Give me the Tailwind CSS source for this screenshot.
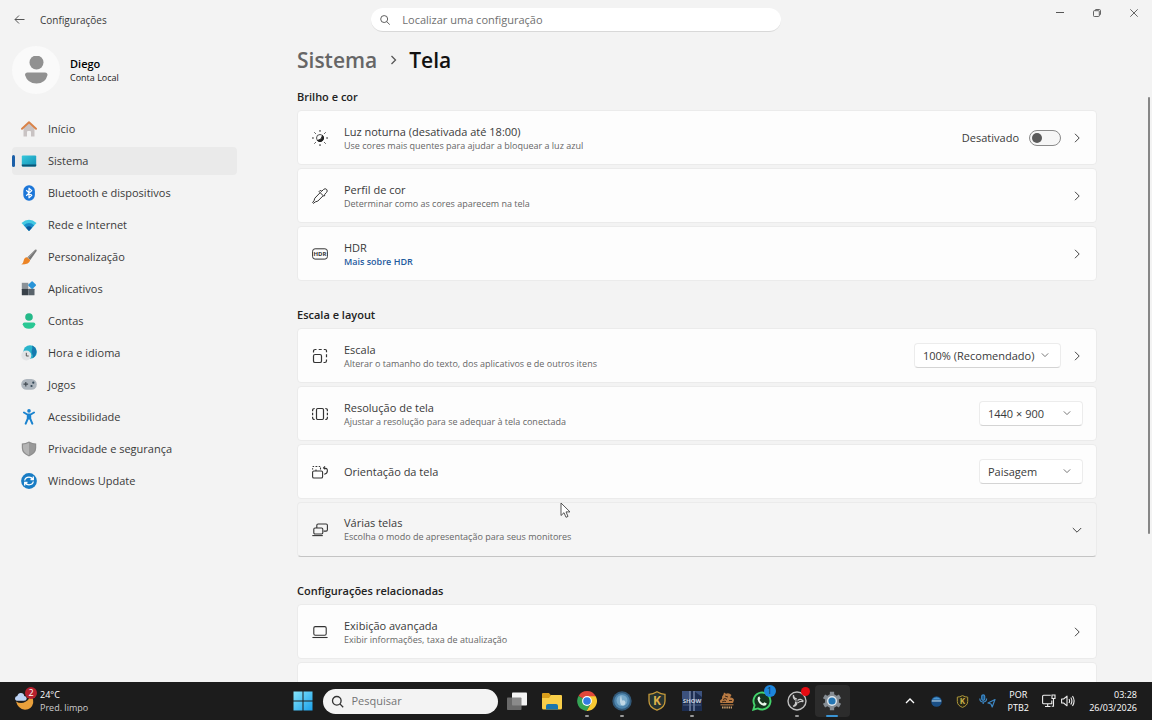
<!DOCTYPE html>
<html lang="pt-BR">
<head>
  <meta charset="UTF-8" />
  <meta name="viewport" content="width=device-width, initial-scale=1.0" />
  <title>Configurações</title>
  <script src="https://cdn.jsdelivr.net/npm/@tailwindcss/browser@4"></script>
</head>
<body class="relative flex h-screen flex-col overflow-hidden bg-[#f3f3f3] font-['Open_Sans','Noto_Sans',sans-serif] text-[11px] leading-4 text-[#3a3a3a]">

  <!-- TITLE BAR -->
  <header class="grid h-10 shrink-0 grid-cols-[1fr_410px_1fr] items-center">
    <div class="flex items-center gap-3 pl-3">
      <button aria-label="Voltar" class="flex h-5 w-4 items-center justify-center">
        <svg class="size-3 text-[#555]" viewBox="0 0 12 12" fill="none" stroke="currentColor"><path d="M10.500 5.500H1M5 1.500l-4 4 4 4" /></svg>
      </button>
      <span class="text-[10px]">Configurações</span>
    </div>
    <label class="flex h-6 items-center gap-3 rounded-full border-b border-[#d8d8d8] bg-white pl-2">
      <svg class="size-3 text-[#555]" viewBox="0 0 12 12" fill="none" stroke="currentColor"><circle cx="5.500" cy="5" r="3.700" /><path d="M8.200 7.700l3.300 3.300" /></svg>
      <input type="text" aria-label="Localizar uma configuração" placeholder="Localizar uma configuração" class="w-full bg-transparent outline-none placeholder:text-[#707070]" />
    </label>
    <div class="flex h-[26px] items-center justify-end self-start text-[#555]">
      <button aria-label="Minimizar" class="flex w-[37px] justify-center"><svg class="size-2" viewBox="0 0 8 8" stroke="currentColor"><path d="M0 3.500h8" /></svg></button>
      <button aria-label="Restaurar" class="flex w-[37px] justify-center"><svg class="size-2" viewBox="0 0 8 8" fill="none" stroke="currentColor" stroke-width=".9"><rect x=".5" y="1.700" width="5.800" height="5.800" rx=".8" /><path d="M2.200 1.500V1.300q0-.8.800-.8h3.300q1.200 0 1.200 1.200v3.400q0 .8-.8.800h-.3" /></svg></button>
      <button aria-label="Fechar" class="flex w-[37px] justify-center"><svg class="size-2" viewBox="0 0 8 8" stroke="currentColor" stroke-width=".9"><path d="M.3.300l7.400 7.400M7.700.300L.300 7.700" /></svg></button>
    </div>
  </header>

  <div class="flex min-h-0 flex-1">

    <!-- SIDEBAR -->
    <aside class="w-[242px] shrink-0 pt-[6px] pl-3">
      <div class="mb-[21px] flex items-center gap-[10px]">
        <div class="flex size-12 items-center justify-center rounded-full bg-[#fafafa]">
          <svg class="h-7 w-6" viewBox="0 0 24 28" fill="#919191"><circle cx="12.500" cy="6.500" r="7" /><path d="M3.500 16.500h17.500q2.500 0 2.500 2.500Q21.500 27.500 12.500 27.500T1 19q0-2.500 2.500-2.500z" /></svg>
        </div>
        <div class="pt-[2px]">
          <p class="leading-[14px] font-semibold text-black">Diego</p>
          <p class="text-[9px] leading-[14px] text-[#222]">Conta Local</p>
        </div>
      </div>

      <nav class="flex w-[225px] flex-col gap-1">
        <a href="#" class="flex h-7 items-center gap-[11px] rounded pl-[9px]">
          <svg class="size-4" viewBox="0 0 16 16"><path d="M2.500 7L8 2l5.500 5v8.500H10V11q0-1-1-1H7q-1 0-1 1v4.500H2.500z" fill="#c9c3c3" /><path d="M1 7.800L8 1.200l7 6.600" fill="none" stroke="#d98248" stroke-width="1.900" stroke-linecap="round" stroke-linejoin="round" /></svg>
          Início
        </a>
        <a href="#" aria-current="page" class="flex h-7 items-center rounded bg-[#eaeaea]">
          <span class="mr-[6px] h-3 w-[3px] rounded-full bg-[#1b5fa8]"></span>
          <svg class="mr-[11px] size-4" viewBox="0 0 16 16"><defs><linearGradient id="sys" x1="0" y1="0" x2="1" y2="1"><stop stop-color="#36c9dc" /><stop offset="1" stop-color="#138fb5" /></linearGradient></defs><rect x=".8" y="2.500" width="14.400" height="11" rx="1" fill="url(#sys)" /><path d="M.8 11.500h14.400v1q0 1-1 1H1.800q-1 0-1-1z" fill="#0b5576" /></svg>
          Sistema
        </a>
        <a href="#" class="flex h-7 items-center gap-[11px] rounded pl-[9px]">
          <svg class="size-4" viewBox="0 0 16 16"><rect x="2.300" y=".3" width="11.600" height="15.400" rx="5.600" fill="#1c76d8" /><path d="M5.200 5.200l5.600 5.200L8 12.800V3.200l2.800 2.400-5.600 5.200" fill="none" stroke="#fff" stroke-width="1.200" stroke-linejoin="round" /></svg>
          Bluetooth e dispositivos
        </a>
        <a href="#" class="flex h-7 items-center gap-[11px] rounded pl-[9px]">
          <svg class="size-4" viewBox="0 0 16 16"><path d="M.5 6Q8 -.5 15.500 6L8 14z" fill="#42c8e2" /><path d="M2.800 8.300Q8 3.500 13.200 8.300L8 14z" fill="#1a8ec9" /><path d="M5 10.700Q8 8 11 10.700L8 14z" fill="#0d5799" /></svg>
          Rede e Internet
        </a>
        <a href="#" class="flex h-7 items-center gap-[11px] rounded pl-[9px]">
          <svg class="size-4" viewBox="0 0 16 16"><path d="M14 .8q2-.8 1.600 1.200L9.300 11 6.200 8.500z" fill="#777" /><path d="M14.200 1L7 9" stroke="#aaa" stroke-width=".9" /><path d="M5.800 8.200l3.400 2.700Q8.500 15.500.3 15.500 2.500 14 2.700 11.500q.5-3 3.100-3.300z" fill="#ec8424" /></svg>
          Personalização
        </a>
        <a href="#" class="flex h-7 items-center gap-[11px] rounded pl-[9px]">
          <svg class="size-4" viewBox="0 0 16 16"><rect x=".8" y="1.800" width="6.500" height="6" fill="#8b9298" /><rect x=".8" y="7.800" width="6.500" height="6.500" rx=".5" fill="#394149" /><rect x="7.300" y="7.800" width="6.200" height="6.500" rx=".5" fill="#59636b" /><rect x="8.100" y="1.100" width="6" height="6" rx=".8" transform="rotate(45 11.100 4.100)" fill="#2894d8" /></svg>
          Aplicativos
        </a>
        <a href="#" class="flex h-7 items-center gap-[11px] rounded pl-[9px]">
          <svg class="size-4" viewBox="0 0 16 16"><circle cx="8" cy="4" r="3.800" fill="#25b989" /><path d="M3.500 9.500h9q1.800 0 1.800 1.700Q13.300 15.800 8 15.800T1.700 11.200q0-1.700 1.800-1.700z" fill="#2ac894" /></svg>
          Contas
        </a>
        <a href="#" class="flex h-7 items-center gap-[11px] rounded pl-[9px]">
          <svg class="size-4" viewBox="0 0 16 16"><circle cx="9" cy="7" r="6.800" fill="#2ab4cb" /><path d="M11 .5q4 1.500 4.500 5.500 0 5-4 7.300 1-2.500-.3-4.300-1.200-1.500-.5-3.500 1.300-2 .3-5z" fill="#1679ae" /><circle cx="5.300" cy="10.500" r="5" fill="#e2e4e6" /><path d="M5.300 7.800V11h2.400" fill="none" stroke="#555" /></svg>
          Hora e idioma
        </a>
        <a href="#" class="flex h-7 items-center gap-[11px] rounded pl-[9px]">
          <svg class="size-4" viewBox="0 0 16 16"><rect x=".2" y="2" width="15.600" height="10.800" rx="5.400" fill="#adb5bd" /><path d="M4.800 5v4.500M2.500 7.200h4.600" stroke="#434b53" stroke-width="1.200" /><circle cx="10.500" cy="9" r="1.100" fill="#344858" /><circle cx="12.300" cy="5.700" r="1.100" fill="#344858" /></svg>
          Jogos
        </a>
        <a href="#" class="flex h-7 items-center gap-[11px] rounded pl-[9px]">
          <svg class="size-4" viewBox="0 0 16 16" fill="none" stroke="#1a83cf" stroke-width="2" stroke-linecap="round" stroke-linejoin="round"><circle cx="8" cy="1.900" r="1.800" fill="#1a83cf" stroke="none" /><path d="M3 3.500l3.300 2h3.400l3.300-2M6.800 5.600v4L4.700 14.700M9.200 5.600v4l2.100 5.100M8 5.500v4" /></svg>
          Acessibilidade
        </a>
        <a href="#" class="flex h-7 items-center gap-[11px] rounded pl-[9px]">
          <svg class="size-4" viewBox="0 0 16 16"><path d="M8 .5q3.500 2 7.200 2V7q0 5.500-7.200 8.500Q.8 12.500.8 7V2.500q3.700 0 7.200-2z" fill="#8e8e8e" /><path d="M8 1.800q3 1.500 6 1.700V7q0 4.500-6 7.200z" fill="#999" /><path d="M8 1.800Q5 3.300 2 3.500V7q0 4.500 6 7.200z" fill="#b4b4b4" /></svg>
          Privacidade e segurança
        </a>
        <a href="#" class="flex h-7 items-center gap-[11px] rounded pl-[9px]">
          <svg class="size-4" viewBox="0 0 16 16"><circle cx="8" cy="8" r="7.900" fill="#187cc4" /><path d="M3.700 7.500Q4.300 4.200 8 4.200q2.500 0 3.800 2M12.300 8.500q-.6 3.300-4.300 3.300-2.500 0-3.800-2M12.300 3.500v3H9.500M3.700 12.500v-3h2.800" fill="none" stroke="#fff" stroke-width="1.300" /></svg>
          Windows Update
        </a>
      </nav>
    </aside>

    <!-- CONTENT -->
    <main class="relative flex flex-1 justify-center overflow-hidden">
      <div class="w-full max-w-[800px] pt-[6px]">
        <h1 class="flex items-center text-[21px] leading-7 font-semibold">
          <a href="#" class="text-[#666]">Sistema</a>
          <svg class="mx-[10px] size-3 text-[#555]" viewBox="0 0 12 12" fill="none" stroke="currentColor" stroke-width="1.300"><path d="M4.500 2L8.500 6l-4 4" /></svg>
          <span class="text-[#111]">Tela</span>
        </h1>

        <section class="mt-[15px]">
          <h2 class="mb-[5px] font-semibold text-[#222]">Brilho e cor</h2>
          <div class="flex flex-col gap-[3px]">
            <div class="flex h-[55px] items-center rounded border border-[#ebebeb] bg-[#fdfdfd] pr-[13px] pl-[14px]">
              <svg class="mr-4 size-4 text-[#222]" viewBox="0 0 16 16" fill="none" stroke="currentColor"><circle cx="8" cy="8" r="3.500" stroke-width=".8" /><path d="M10.500 5.500a3.500 3.500 0 1 1-5 5q4.500-.5 5-5z" fill="currentColor" /><path d="M8 .4v1M8 14.600v1M.4 8h1M14.600 8h1M2.700 2.700l.7.700M12.600 12.600l.7.700M2.700 13.300l.7-.7M12.600 3.400l.7-.7" stroke-linecap="round" /></svg>
              <div class="flex-1 pt-[2px]">
                <p class="leading-[14px]">Luz noturna (desativada até 18:00)</p>
                <p class="text-[9px] leading-[14px] text-[#666]">Use cores mais quentes para ajudar a bloquear a luz azul</p>
              </div>
              <label for="luz" class="mr-[10px]">Desativado</label>
              <input id="luz" type="checkbox" role="switch" class="mr-[10px] flex h-4 w-8 appearance-none items-center rounded-full border border-[#8a8a8a] bg-[#f6f6f6] pl-[2px] before:size-[10px] before:rounded-full before:bg-[#5a5a5a] checked:bg-[#1b5fa8] checked:pl-[18px] checked:before:bg-white" />
              <button aria-label="Abrir luz noturna"><svg class="size-3 text-[#444]" viewBox="0 0 12 12" fill="none" stroke="currentColor"><path d="M4 1.800L8.200 6 4 10.200" /></svg></button>
            </div>
            <div class="flex h-[55px] items-center rounded border border-[#ebebeb] bg-[#fdfdfd] pr-[13px] pl-[14px]">
              <svg class="mr-4 size-4 text-[#333]" viewBox="0 0 16 16" fill="none" stroke="currentColor" stroke-linejoin="round" stroke-linecap="round"><path d="M9.700 3.300l1.800-1.800q1.700-1.600 3.200 0 1.200 1.500-.2 3l-1.900 1.800.5.700-1.300 1.300-4.700-4.700L8.400 2.300zM8 4.800l-5.200 5.400-.8 2.600-1.400 1.700.8.900 1.900-1.500 2.500-.8L11 7.900" /></svg>
              <div class="flex-1 pt-[2px]">
                <p class="leading-[14px]">Perfil de cor</p>
                <p class="text-[9px] leading-[14px] text-[#666]">Determinar como as cores aparecem na tela</p>
              </div>
              <button aria-label="Abrir perfil de cor"><svg class="size-3 text-[#444]" viewBox="0 0 12 12" fill="none" stroke="currentColor"><path d="M4 1.800L8.200 6 4 10.200" /></svg></button>
            </div>
            <div class="flex h-[55px] items-center rounded border border-[#ebebeb] bg-[#fdfdfd] pr-[13px] pl-[14px]">
              <svg class="mr-4 size-4 text-[#333]" viewBox="0 0 16 16"><rect x=".6" y="2.800" width="14.800" height="10.300" rx="2.500" fill="none" stroke="currentColor" /><text x="8" y="10.300" text-anchor="middle" font-size="6" font-weight="700" fill="currentColor">HDR</text></svg>
              <div class="flex-1 pt-[2px]">
                <p class="leading-[14px]">HDR</p>
                <a href="#" class="block text-[9px] leading-[14px] font-semibold text-[#1f5b9f]">Mais sobre HDR</a>
              </div>
              <button aria-label="Abrir HDR"><svg class="size-3 text-[#444]" viewBox="0 0 12 12" fill="none" stroke="currentColor"><path d="M4 1.800L8.200 6 4 10.200" /></svg></button>
            </div>
          </div>
        </section>

        <section class="mt-[26px]">
          <h2 class="mb-[5px] font-semibold text-[#222]">Escala e layout</h2>
          <div class="flex flex-col gap-[3px]">
            <div class="flex h-[55px] items-center rounded border border-[#ebebeb] bg-[#fdfdfd] pr-[13px] pl-[14px]">
              <svg class="mr-4 size-4 text-[#333]" viewBox="0 0 16 16" fill="none" stroke="currentColor" stroke-width="1.200"><rect x="1.500" y="6.500" width="8" height="8" rx="1.600" /><path d="M1.500 4.500V3.300q0-1.800 1.800-1.800h1.200M6.700 1.500h3M11.800 1.500h1.400q1.300 0 1.300 1.300v1.500M14.500 6.300v3M14.500 11.500v1.200q0 1.800-1.800 1.800h-1.200" /></svg>
              <div class="flex-1 pt-[2px]">
                <p class="leading-[14px]">Escala</p>
                <p class="text-[9px] leading-[14px] text-[#666]">Alterar o tamanho do texto, dos aplicativos e de outros itens</p>
              </div>
              <div class="relative mr-[10px]">
                <select aria-label="Escala" class="h-[25px] w-[147px] appearance-none rounded border border-[#ececec] border-b-[#d4d4d4] bg-white pl-2">
                  <option>100% (Recomendado)</option>
                </select>
                <svg class="pointer-events-none absolute top-2 right-3 size-2 text-[#777]" viewBox="0 0 8 8" fill="none" stroke="currentColor"><path d="M.8 2.400L4 5.600l3.200-3.200" /></svg>
              </div>
              <button aria-label="Abrir escala"><svg class="size-3 text-[#444]" viewBox="0 0 12 12" fill="none" stroke="currentColor"><path d="M4 1.800L8.200 6 4 10.200" /></svg></button>
            </div>
            <div class="flex h-[55px] items-center rounded border border-[#ebebeb] bg-[#fdfdfd] pr-[13px] pl-[14px]">
              <svg class="mr-4 size-4 text-[#333]" viewBox="0 0 16 16" fill="none" stroke="currentColor" stroke-width="1.200"><rect x="4.500" y="2.500" width="7" height="11" rx="1.200" /><path d="M2.700 2.500Q.6 2.500.6 4.300v1M.6 6.700v2.600M.6 10.700v1q0 1.800 2.100 1.800M13.300 2.500q2.100 0 2.100 1.800v1M15.400 6.700v2.600M15.400 10.700v1q0 1.800-2.100 1.800" /></svg>
              <div class="flex-1 pt-[2px]">
                <p class="leading-[14px]">Resolução de tela</p>
                <p class="text-[9px] leading-[14px] text-[#666]">Ajustar a resolução para se adequar à tela conectada</p>
              </div>
              <div class="relative">
                <select aria-label="Resolução de tela" class="h-[25px] w-[104px] appearance-none rounded border border-[#ececec] border-b-[#d4d4d4] bg-white pl-2">
                  <option>1440 × 900</option>
                </select>
                <svg class="pointer-events-none absolute top-2 right-3 size-2 text-[#777]" viewBox="0 0 8 8" fill="none" stroke="currentColor"><path d="M.8 2.400L4 5.600l3.200-3.200" /></svg>
              </div>
            </div>
            <div class="flex h-[55px] items-center rounded border border-[#ebebeb] bg-[#fdfdfd] pr-[13px] pl-[14px]">
              <svg class="mr-4 size-4 text-[#333]" viewBox="0 0 16 16" fill="none" stroke="currentColor" stroke-width="1.100"><rect x=".6" y="7" width="10" height="7" rx="1.300" /><path d="M.6 5.500V4.300M.6 2.500h1.500M3.500 2.500h1.800M6.700 2.500h1.500M8.500 3.500v2M4 7V5.500M11.500 4q3.900-.5 3.900 2.700 0 2.800-3.200 3.500M13 2.300L11.500 4l1.800 1.400" /></svg>
              <p class="flex-1">Orientação da tela</p>
              <div class="relative">
                <select aria-label="Orientação da tela" class="h-[25px] w-[104px] appearance-none rounded border border-[#ececec] border-b-[#d4d4d4] bg-white pl-2">
                  <option>Paisagem</option>
                </select>
                <svg class="pointer-events-none absolute top-2 right-3 size-2 text-[#777]" viewBox="0 0 8 8" fill="none" stroke="currentColor"><path d="M.8 2.400L4 5.600l3.200-3.200" /></svg>
              </div>
            </div>
            <div class="flex h-[55px] items-center rounded border border-[#ebebeb] border-b-[#c4c4c4] bg-[#f5f5f5] pr-[13px] pl-[14px]">
              <svg class="mr-4 size-4 text-[#333]" viewBox="0 0 16 16" fill="none" stroke="currentColor" stroke-width="1.100"><path d="M4.800 6V3.300q0-1.300 1.300-1.300h8q1.300 0 1.300 1.300v4.500q0 1.300-1.300 1.300h-2.500" /><rect x="1.800" y="6" width="9" height="6" rx="1.200" /><path d="M.3 13.600h10.500" /></svg>
              <div class="flex-1">
                <p class="leading-[14px]">Várias telas</p>
                <p class="text-[9px] leading-[14px] text-[#666]">Escolha o modo de apresentação para seus monitores</p>
              </div>
              <button aria-label="Expandir várias telas"><svg class="size-3 text-[#444]" viewBox="0 0 12 12" fill="none" stroke="currentColor"><path d="M1.800 4L6 8.200 10.200 4" /></svg></button>
            </div>
          </div>
        </section>

        <section class="mt-[26px]">
          <h2 class="mb-[5px] font-semibold text-[#222]">Configurações relacionadas</h2>
          <div class="flex flex-col gap-[3px]">
            <div class="flex h-[55px] items-center rounded border border-[#ebebeb] bg-[#fdfdfd] pr-[13px] pl-[14px]">
              <svg class="mr-4 size-4 text-[#333]" viewBox="0 0 16 16" fill="none" stroke="currentColor" stroke-width="1.100"><rect x="1.800" y="2.600" width="12.400" height="8.600" rx="1.500" /><path d="M.4 13.500h15.200" /></svg>
              <div class="flex-1 pt-[2px]">
                <p class="leading-[14px]">Exibição avançada</p>
                <p class="text-[9px] leading-[14px] text-[#666]">Exibir informações, taxa de atualização</p>
              </div>
              <button aria-label="Abrir exibição avançada"><svg class="size-3 text-[#444]" viewBox="0 0 12 12" fill="none" stroke="currentColor"><path d="M4 1.800L8.200 6 4 10.200" /></svg></button>
            </div>
            <div class="h-[55px] rounded border border-[#ebebeb] bg-[#fdfdfd]"></div>
          </div>
        </section>
      </div>

      <!-- scrollbar thumb -->
      <div class="absolute top-[57px] right-[2px] h-[437px] w-[2px] rounded-full bg-[#868686]"></div>
    </main>
  </div>

  <!-- mouse pointer -->
  <svg class="absolute top-[502px] left-[560px] z-10 h-4 w-[11px]" viewBox="0 0 11 16"><path d="M1 1v12.500l3-2.800 2 4.600 2-.9-2-4.500h4z" fill="#fff" stroke="#444" stroke-width=".9" stroke-linejoin="round" /></svg>

  <!-- TASKBAR -->
  <footer class="flex h-[38px] shrink-0 items-center bg-[#1c1c1c] pr-[15px] pl-[5px] text-white">
    <div class="flex flex-1">
      <button class="flex items-center gap-[6px] pl-[9px] text-left">
        <span class="relative">
          <svg class="size-5" viewBox="0 0 20 20"><path d="M2 10.500q5 3 9.500.3Q16 8.500 15.500 4.500q4.500 2 3.700 7.500-1.500 6.500-8.200 6.700Q4 18 2 10.500z" fill="#e9a03b" /><path d="M4 9.800q-3 0-3-2.400Q1 5.300 3.300 5 4.200 1.800 7 2q2.800.2 3.300 3 2.400.2 2.400 2.400t-2.700 2.400z" fill="#bcd3f5" /></svg>
          <span class="absolute -top-1 -right-[3px] flex size-3 items-center justify-center rounded-full bg-[#b5202e] text-[9px]">2</span>
        </span>
        <span class="text-[9px] leading-[13px]"><span class="block">24°C</span><span class="block text-[#ccc]">Pred. limpo</span></span>
      </button>
    </div>

    <div class="flex items-center">
      <button aria-label="Iniciar" class="mr-[10px]"><svg class="size-5" viewBox="0 0 20 20"><defs><linearGradient id="win" x1="0" y1="0" x2="1" y2="1"><stop stop-color="#86e5fb" /><stop offset="1" stop-color="#1aa0ea" /></linearGradient></defs><path d="M.5.500h9v9h-9zM10.500.500h9v9h-9zM.5 10.500h9v9h-9zM10.500 10.500h9v9h-9z" fill="url(#win)" /></svg></button>
      <label class="mr-[2px] flex h-[25px] w-[175px] items-center gap-2 rounded-full bg-[#f3f3f3] pl-2">
        <svg class="size-[13px] shrink-0 text-[#333]" viewBox="0 0 13 13" fill="none" stroke="currentColor" stroke-width="1.300"><circle cx="5.800" cy="5.800" r="4.300" /><path d="M8.900 8.900l3.300 3.300" /></svg>
        <input type="text" aria-label="Pesquisar" placeholder="Pesquisar" class="w-full bg-transparent text-[11px] text-black outline-none placeholder:text-[#737373]" />
      </label>
      <button aria-label="Visão de tarefas" class="flex h-8 w-[35px] items-center justify-center"><svg class="size-5" viewBox="0 0 20 20"><rect x="5" y="1.500" width="15" height="13" rx=".8" fill="#f4f4f4" /><rect x="0" y="6.500" width="14.500" height="12.500" rx=".8" fill="#777" fill-opacity=".85" /></svg></button>
      <button aria-label="Explorador de Arquivos" class="flex h-8 w-[35px] items-center justify-center"><svg class="size-5" viewBox="0 0 20 20"><path d="M0 3q0-1 1-1h6l2 2.500v4H0z" fill="#d99e1b" /><path d="M0 7h7l2-3h10q1 0 1 1v12q0 1.500-1.500 1.500h-17Q0 18.500 0 17z" fill="#f8ce49" /><path d="M4 18.500V15q0-2 2-2h8q2 0 2 2v3.500z" fill="#1976ae" /></svg></button>
      <button aria-label="Google Chrome" class="relative flex h-8 w-[35px] items-center justify-center">
        <svg class="size-5" viewBox="0 0 20 20"><path d="M10 10L1.500 5A9.900 9.900 0 0 1 18.700 5.200z" fill="#e0473a" /><path d="M10 10L1.500 5a9.900 9.900 0 0 0 8 14.900L14 12z" fill="#35a455" /><path d="M10 5.200h8.700A9.900 9.900 0 0 1 9.500 19.900l4.800-7.800z" fill="#f8c932" /><circle cx="10" cy="10" r="4.900" fill="#fff" /><circle cx="10" cy="10" r="3.800" fill="#347be2" /></svg>
        <span class="absolute bottom-0 h-[2px] w-1 rounded-full bg-[#999]"></span>
      </button>
      <button aria-label="Navegador" class="relative flex h-8 w-[35px] items-center justify-center">
        <svg class="size-5" viewBox="0 0 20 20"><circle cx="10" cy="10" r="9.700" fill="#315878" /><circle cx="10" cy="10" r="7.800" fill="#4f86ae" /><circle cx="10" cy="9.500" r="5.500" fill="#79aaca" /><path d="M9 4q-2 6 0 10 4 1.500 4.500-2.500-.5-3-3.500-2z" fill="#c0d8e6" /></svg>
        <span class="absolute bottom-0 h-[2px] w-1 rounded-full bg-[#999]"></span>
      </button>
      <button aria-label="K" class="flex h-8 w-[35px] items-center justify-center"><svg class="size-5" viewBox="0 0 20 20"><path d="M10 .8q4 2.500 8 2.500V10q0 6.500-8 9.200Q2 16.500 2 10V3.300q4 0 8-2.500z" fill="#263331" stroke="#c69a3a" stroke-width="1.300" /><text x="10" y="14.300" text-anchor="middle" font-size="12" font-weight="700" fill="#ddb04a">K</text></svg></button>
      <button aria-label="Show" class="relative flex h-8 w-[35px] items-center justify-center">
        <svg class="size-5" viewBox="0 0 20 20"><rect width="20" height="20" fill="#1c2d51" /><path d="M0 0h8v8H0zM12 0h8v6z" fill="#3c527e" /><path d="M8 0v20M12 0v20" stroke="#8292b2" stroke-width="1.300" /><text x="10" y="12" text-anchor="middle" font-size="6" font-weight="700" fill="#cbd2df">SHOW</text><path d="M1 14h18" stroke="#60729a" stroke-width=".7" /></svg>
        <span class="absolute bottom-0 h-[2px] w-1 rounded-full bg-[#999]"></span>
      </button>
      <button aria-label="Jogo" class="flex h-8 w-[35px] items-center justify-center"><svg class="h-[18px] w-4" viewBox="0 0 16 18"><path d="M1.500 11Q0 8 3 7q-.5-3 1.500-4.500L5 .5l2 1.300Q10 .5 12.500 3L11 5.500q3.500-.2 4 2.500l-1 3z" fill="#b87a43" /><path d="M4 7.500q2-2 4 0M6 4l3 1M3 10q2-1.500 4-.5M10 8.500h3" fill="none" stroke="#3c2819" /><path d="M1.500 12h13v1.500h-13z" fill="#8a5f38" /><path d="M3 15.500h10" stroke="#c79b68" stroke-width="2" stroke-dasharray="1.500 .7" /></svg></button>
      <button aria-label="WhatsApp" class="relative flex h-8 w-[35px] items-center justify-center">
        <svg class="size-5" viewBox="0 0 20 20"><path d="M1.300 18.700l1.300-4.500a8.500 8.500 0 1 1 3.200 3.200z" fill="#15351f" stroke="#43d36b" stroke-width="1.900" /><path d="M7.300 5.300l1.200 2.500-1 1.300q1.200 2.300 3.500 3.400l1.300-1.300 2.500 1.300q-.4 2.500-3 2.300Q7 13.800 5.500 8.300q0-2.300 1.800-3z" fill="#e8f7ec" /></svg>
        <span class="absolute top-0 right-1 flex size-3 items-center justify-center rounded-full bg-[#1d86dc] text-[9px] text-[#12324f]">1</span>
      </button>
      <button aria-label="OBS Studio" class="relative flex h-8 w-[35px] items-center justify-center">
        <svg class="size-5" viewBox="0 0 20 20"><circle cx="10" cy="10" r="9" fill="#282828" stroke="#c0c0c0" stroke-width="1.400" /><path d="M9.500 9.500q-4-1.500-3-5.500M10.500 9.500q3.300-2.700 6 .8M10 10.500q.2 4.200-3.800 5M6.500 4q0 3.500 3.500 4M16.300 10.700q-3.300-1.300-5.300 1.300M6 15.300Q9.200 14 8.500 10.500" fill="none" stroke="#c9c9c9" stroke-width="1.200" /></svg>
        <span class="absolute top-[2px] right-[5px] size-[9px] rounded-full bg-[#e60b12]"></span>
        <span class="absolute bottom-0 h-[2px] w-1 rounded-full bg-[#999]"></span>
      </button>
      <button aria-label="Configurações" class="relative flex h-8 w-[35px] items-center justify-center rounded bg-[#2c2c2c]">
        <svg class="size-5" viewBox="0 0 20 20"><circle cx="10" cy="10" r="7" fill="#868d94" /><path d="M10 .8v18.400M2 5.400l16 9.200M2 14.600l16-9.200" stroke="#868d94" stroke-width="4.300" /><circle cx="10" cy="10" r="5" fill="#dfe7ed" /><circle cx="10" cy="10" r="3.600" fill="#2476b4" /></svg>
        <span class="absolute bottom-0 h-[2px] w-3 rounded-full bg-[#3a94d4]"></span>
      </button>
    </div>

    <div class="flex flex-1 items-center justify-end">
      <button aria-label="Mostrar ícones ocultos" class="flex w-[26px] justify-center"><svg class="size-[10px]" viewBox="0 0 10 10" fill="none" stroke="#fff" stroke-width="1.300"><path d="M1 7l4-4 4 4" /></svg></button>
      <button aria-label="Rede VPN" class="flex w-[26px] justify-center"><svg class="size-[11px]" viewBox="0 0 11 11"><circle cx="5.500" cy="5.500" r="5.300" fill="#1a4f86" /><path d="M1 3.500Q5.500-1 10 3.500z" fill="#4b96cf" /><path d="M.8 4.300h9.400v1.300H.8z" fill="#a9c7de" /></svg></button>
      <button aria-label="K" class="flex w-[26px] justify-center"><svg class="size-[13px]" viewBox="0 0 13 13"><path d="M6.500.600q2.700 1.500 5.200 1.500v4.400q0 4-5.200 5.900-5.200-1.900-5.200-5.900V2.100q2.500 0 5.200-1.500z" fill="#292615" stroke="#ae983b" /><text x="6.500" y="9.300" text-anchor="middle" font-size="8" font-weight="700" fill="#c7b04a">K</text></svg></button>
      <button aria-label="Microfone e localização em uso" class="flex w-6 justify-center"><svg class="h-[14px] w-[17px]" viewBox="0 0 17 14" fill="none" stroke="#3d87c4" stroke-width="1.200"><rect x="2.700" y=".8" width="3" height="5.500" rx="1.500" fill="#1c598c" /><path d="M.8 4.500q0 3.500 3.400 3.500t3.400-3.500M4.200 8v2M16 5.500L9 9l3 1 1.200 3z" stroke-linejoin="round" /></svg></button>
      <button class="w-[38px] text-center text-[9px] leading-[13px]">POR<br />PTB2</button>
      <button aria-label="Rede e volume" class="mr-[10px] flex w-[42px] items-center justify-center gap-[5px]">
        <svg class="h-[14px] w-[14px]" viewBox="0 0 14 14" fill="none" stroke="#eee" stroke-width="1.100"><path d="M8.800 1.300H1.600q-1 0-1 1v6.400q0 1 1 1h8.200V6.500M3 12.500h5.500M5.700 9.700v2.800M10 1h3v3.500h-3zM11.500 4.500v7.800H9.700" /></svg>
        <svg class="h-[14px] w-[14px]" viewBox="0 0 14 14" fill="none" stroke="#eee" stroke-width="1.100"><path d="M.6 5h2L6 2.200v9.600L2.600 9h-2zM8 5q1.200 2 0 4M9.800 3.500q2.200 3.500 0 7M11.500 2q3.200 5 0 10" stroke-linejoin="round" /></svg>
      </button>
      <button class="text-right text-[9px] leading-[13px]">03:28<br />26/03/2026</button>
    </div>
  </footer>
</body>
</html>
